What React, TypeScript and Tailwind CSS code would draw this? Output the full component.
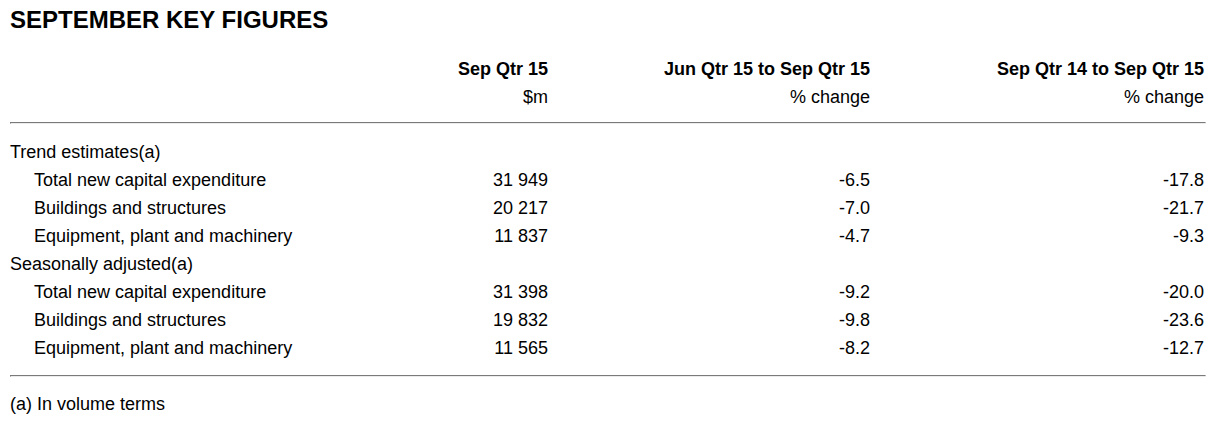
const rows: { label: string; indent?: boolean; v?: [string, string, string] }[] = [
  { label: 'Trend estimates(a)' },
  { label: 'Total new capital expenditure', indent: true, v: ['31 949', '-6.5', '-17.8'] },
  { label: 'Buildings and structures', indent: true, v: ['20 217', '-7.0', '-21.7'] },
  { label: 'Equipment, plant and machinery', indent: true, v: ['11 837', '-4.7', '-9.3'] },
  { label: 'Seasonally adjusted(a)' },
  { label: 'Total new capital expenditure', indent: true, v: ['31 398', '-9.2', '-20.0'] },
  { label: 'Buildings and structures', indent: true, v: ['19 832', '-9.8', '-23.6'] },
  { label: 'Equipment, plant and machinery', indent: true, v: ['11 565', '-8.2', '-12.7'] },
];

const grid = 'grid grid-cols-[338px_200px_322px_334px] items-center h-[28px]';

function Rule() {
  return <div className="w-[1196px] h-[2px] border-t border-l border-t-[#7a7a7a] border-l-[#7a7a7a] border-b border-r border-b-[#ececec] border-r-[#ececec]" />;
}

export default function App() {
  return (
    <div className="pl-[10px] bg-white text-black font-['Liberation_Sans',Arial,sans-serif] text-[18px]">
      <h1 className="pt-[8px] text-[24px] leading-[24px] font-bold">SEPTEMBER KEY FIGURES</h1>

      <div className="mt-[23px]">
        <div className={`${grid} font-bold`}>
          <div />
          <div className="text-right">Sep Qtr 15</div>
          <div className="text-right">Jun Qtr 15 to Sep Qtr 15</div>
          <div className="text-right">Sep Qtr 14 to Sep Qtr 15</div>
        </div>
        <div className={grid}>
          <div />
          <div className="text-right">$m</div>
          <div className="text-right">% change</div>
          <div className="text-right">% change</div>
        </div>
      </div>

      <div className="mt-[11px]"><Rule /></div>

      <div className="mt-[14px]">
        {rows.map((r, i) => (
          <div key={i} className={grid}>
            <div className={r.indent ? 'pl-[24px]' : ''}>{r.label}</div>
            <div className="text-right">{r.v?.[0]}</div>
            <div className="text-right">{r.v?.[1]}</div>
            <div className="text-right">{r.v?.[2]}</div>
          </div>
        ))}
      </div>

      <div className="mt-[13px]"><Rule /></div>

      <p className="mt-[13px] h-[28px] leading-[28px]">(a) In volume terms</p>
    </div>
  );
}
